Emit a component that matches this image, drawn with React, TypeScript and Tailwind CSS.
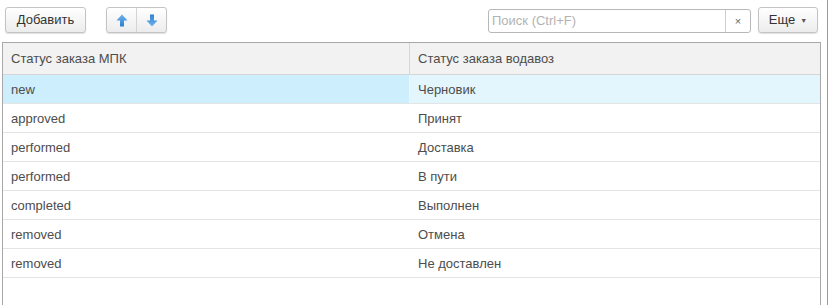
import React from "react";

const rows = [
  ["new", "Черновик"],
  ["approved", "Принят"],
  ["performed", "Доставка"],
  ["performed", "В пути"],
  ["completed", "Выполнен"],
  ["removed", "Отмена"],
  ["removed", "Не доставлен"],
];

const Arrow = ({ down }: { down?: boolean }) => (
  <svg width="12" height="13" viewBox="0 0 12 13" className={down ? "rotate-180" : ""}>
    <defs>
      <linearGradient id="ar" x1="0" y1="0" x2="0" y2="1">
        <stop offset="0" stopColor="#6fb3ec" />
        <stop offset="1" stopColor="#2f7fd0" />
      </linearGradient>
    </defs>
    <path d="M6 0.5 L11.5 6.5 L8 6.5 L8 12.5 L4 12.5 L4 6.5 L0.5 6.5 Z" fill="url(#ar)" />
  </svg>
);

const App = () => {
  return (
    <div
      className="w-[831px] h-[305px] bg-white overflow-hidden flex text-[13px] text-[#4d4d4d]"
      style={{ fontFamily: '"Liberation Sans", Arial, sans-serif' }}
    >
      <div className="w-[828px] h-full border-r border-[#9a9a9a] flex flex-col">
        {/* Панель кнопок */}
        <div className="h-[42px] shrink-0 flex items-start pt-[7px] pl-[5px]">
          <button className="w-[81px] h-[26px] rounded-[3px] border border-[#c4c4c4] bg-gradient-to-b from-white to-[#ececec] shadow-[0_1px_1px_rgba(0,0,0,0.12)] text-[#333]">
            Добавить
          </button>
          <div className="ml-[20px] flex h-[26px] rounded-[3px] border border-[#c4c4c4] bg-gradient-to-b from-white to-[#ececec] shadow-[0_1px_1px_rgba(0,0,0,0.12)]">
            <div className="w-[30px] flex items-center justify-center border-r border-[#d4d4d4]">
              <Arrow />
            </div>
            <div className="w-[29px] flex items-center justify-center">
              <Arrow down />
            </div>
          </div>
          <div className="flex-1" />
          <div className="mt-[2px] flex h-[24px] w-[263px] rounded-[3px] border border-[#b8b8b8] bg-white">
            <div className="flex-1 pl-[3px] flex items-center text-[#b3b3b3] border-r border-[#cfcfcf]">
              Поиск (Ctrl+F)
            </div>
            <div className="w-[24px] flex items-center justify-center text-[#666] text-[11px]">×</div>
          </div>
          <button className="ml-[7px] mr-[9px] w-[60px] h-[26px] rounded-[3px] border border-[#c4c4c4] bg-gradient-to-b from-white to-[#ececec] shadow-[0_1px_1px_rgba(0,0,0,0.12)] text-[#333] flex items-center justify-center gap-[5px]">
            Еще
            <span className="text-[7px] text-[#555] mt-[2px]">▼</span>
          </button>
        </div>

        {/* Таблица */}
        <div className="ml-[2px] w-[819px] flex-1 border border-b-0 border-[#a8a8a8]">
          <div className="flex h-[32px] bg-[#f2f2f2] border-b border-[#d6d6d6]">
            <div className="w-[407px] pl-[8px] flex items-center border-r border-[#d6d6d6]">Статус заказа МПК</div>
            <div className="flex-1 pl-[8px] flex items-center">Статус заказа водавоз</div>
          </div>
          {rows.map(([a, b], i) => (
            <div key={i} className="flex h-[29px] border-b border-[#e4e4e4]">
              <div
                className={`w-[407px] pl-[8px] pt-[1px] flex items-center border-r ${
                  i === 0 ? "bg-[#cdeefc] border-[#e8f6fd]" : "border-transparent"
                }`}
              >
                {a}
              </div>
              <div className={`flex-1 pl-[8px] pt-[1px] flex items-center ${i === 0 ? "bg-[#e3f5fd]" : ""}`}>{b}</div>
            </div>
          ))}
        </div>
      </div>
    </div>
  );
};

export default App;
